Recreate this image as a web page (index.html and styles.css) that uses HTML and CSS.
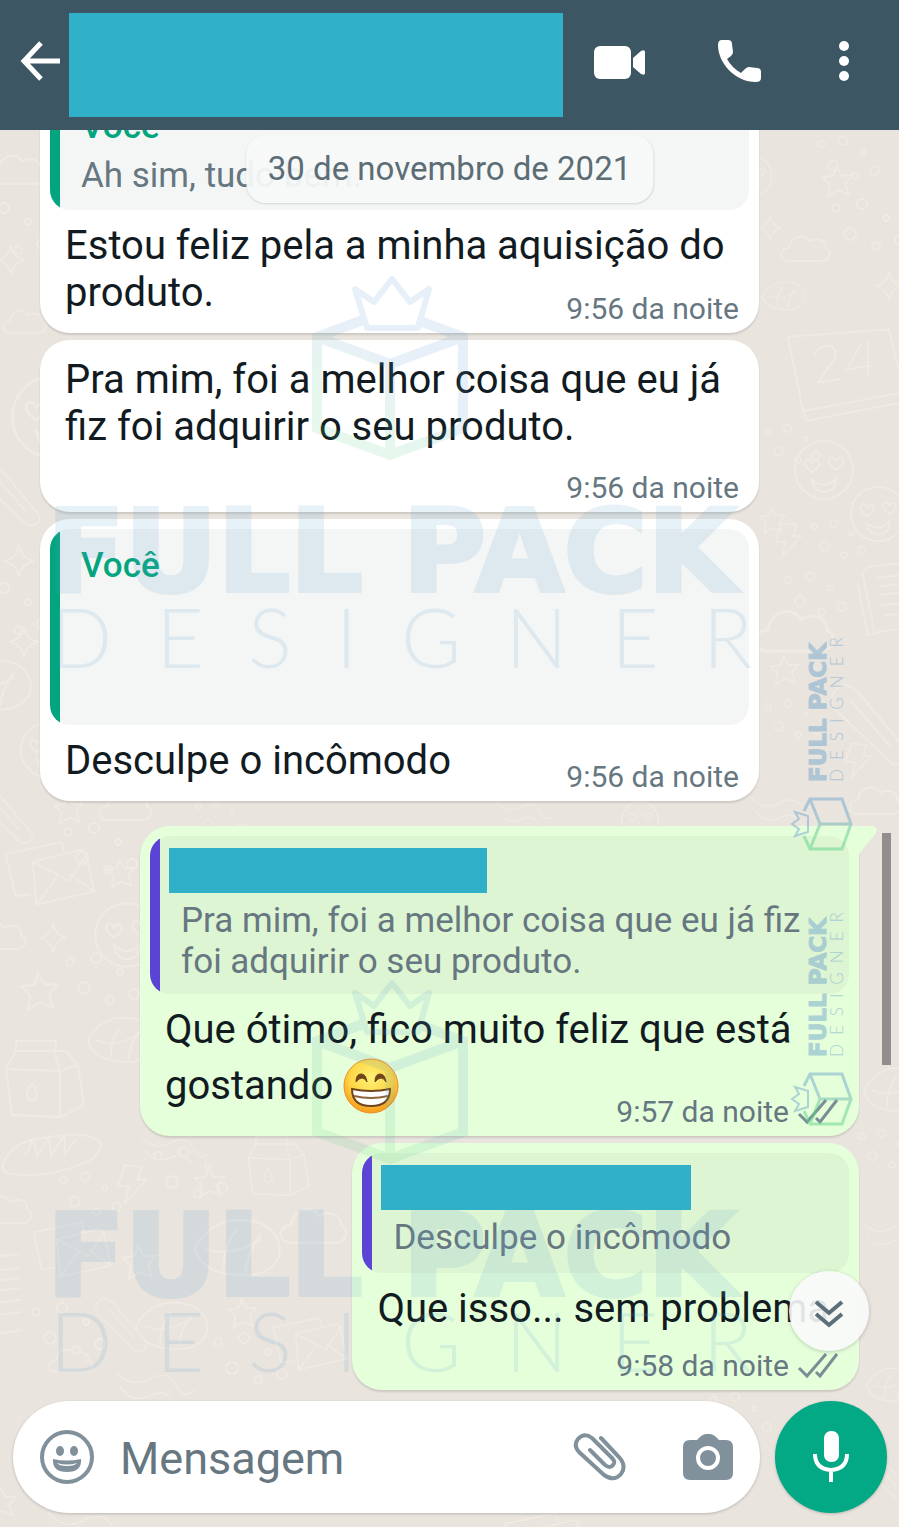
FILE: index.html
```html
<!DOCTYPE html>
<html lang="pt-BR">
<head>
    <meta charset="UTF-8">
    <meta name="viewport" content="width=device-width, initial-scale=1.0">
    <title>Conversa</title>
    <link rel="stylesheet" href="styles.css">
</head>
<body>
    <!-- Shared shapes -->
    <svg class="sprite" width="0" height="0" aria-hidden="true">
        <defs>
            <linearGradient id="cubeFill" gradientUnits="userSpaceOnUse" x1="300" y1="180" x2="370" y2="80">
                <stop offset="0.2" stop-color="#5fd08a"/>
                <stop offset="0.8" stop-color="#649ed2"/>
            </linearGradient>
            <linearGradient id="cubeFillSmall" gradientUnits="userSpaceOnUse" x1="0" y1="0" x2="54" y2="0">
                <stop offset="0.3" stop-color="#5fd28a"/>
                <stop offset="0.7" stop-color="#75a8cf"/>
            </linearGradient>
            <symbol id="double-check" viewBox="0 0 42 28">
                <path d="M2 16l8 8L29 2M19 20l4 4L40 2" fill="none" stroke="currentColor" stroke-width="3"/>
            </symbol>
            <symbol id="star" viewBox="0 0 40 40">
                <path d="M18 4l6 10 12 0-8 9 4 12-12-5-11 7 2-13-8-8 12-2z"/>
            </symbol>
            <symbol id="spark" viewBox="0 0 40 40">
                <path d="M20 3q2 14 16 17-14 3-16 17-2-14-16-17 14-3 16-17z"/>
            </symbol>
            <symbol id="cloud" viewBox="0 0 60 40">
                <path d="M10 34c-9-2-8-14 2-14 1-12 16-17 22-7 8-5 18-1 17 7 8 4 4 14-4 14z"/>
            </symbol>
            <symbol id="bubbles" viewBox="0 0 80 60">
                <circle cx="8" cy="12" r="4"/><circle cx="34" cy="8" r="5"/><circle cx="58" cy="22" r="3"/>
                <circle cx="22" cy="38" r="6"/><circle cx="48" cy="50" r="4"/><circle cx="72" cy="44" r="5"/>
            </symbol>
            <symbol id="mail" viewBox="0 0 100 80">
                <path d="M30 60L14 62 4 18 62 6l3 12M32 26l50-12q5 0 6 5l8 38-60 14zl38 20 20-30M36 71l22-30m12-2l26 18"/>
            </symbol>
            <symbol id="carton" viewBox="0 0 90 90">
                <path d="M14 8h40v10H14zM14 18L4 36l6 46 48 2V38L52 18M58 38l18-6 6 40-24 12M4 36l54 2M52 18l12 0 12 14M30 50q-10 14 0 18 10-4 0-18z"/>
            </symbol>
            <symbol id="shell" viewBox="0 0 110 50">
                <path d="M4 34q10-22 40-24 40-8 56 2 8 8-8 20-40 20-84 14-8-4-4-12zM26 28l8-18 4 18 12-20 2 20 14-22 0 20 12-16"/>
            </symbol>
            <symbol id="bolt" viewBox="0 0 40 50">
                <path d="M10 4l18 2-4 14 10 0-24 26 4-18-12-2z"/>
            </symbol>
            <symbol id="face" viewBox="0 0 64 64">
                <circle cx="32" cy="32" r="29"/>
                <path d="M20 34q-10-7-6-12 4-2 6 3 4-5 7-1 2 5-7 10zM44 32q-10-7-6-12 4-2 6 3 4-5 7-1 2 5-7 10zM20 42q14 10 24-2 0 14-12 14-10 0-12-12z"/>
            </symbol>
            <symbol id="calendar" viewBox="0 0 130 100">
                <path d="M4 10l16 78 106-20M20 88l4 10 104-20M4 10L110 2l12 50M32 30q6-14 18-10 10 10-4 22l-10 16 24-4M82 16L66 44l28-4M88 14l0 36"/>
            </symbol>
            <symbol id="book" viewBox="0 0 70 90">
                <path d="M10 12q4-8 14-8l40-4M10 12l14 70 42-6M4 24l12 60 10 0M26 18l38-4M28 28l36-4M30 38l34-4M32 50l34-4M34 62l32-4"/>
            </symbol>
            <symbol id="leaf" viewBox="0 0 90 60">
                <path d="M4 30q20-34 60-22 20 10 16 30-10 20-40 16-30-2-36-24zM14 30q20 10 50-8M30 50q0-22 12-36M50 52q2-20 14-34"/>
            </symbol>
            <symbol id="tube" viewBox="0 0 90 90">
                <path d="M8 12q10-14 24 0l50 60q0 14-16 12L10 30q-8-10-2-18zM24 20l40 46"/>
            </symbol>
            <symbol id="wave" viewBox="0 0 110 60">
                <path d="M4 10q20 24 46 8 24-10 32 10 12 20 24 6M10 30q14 24 42 10 20-8 30 14"/>
            </symbol>
        </defs>
    </svg>

    <div class="app">
        <svg class="wallpaper" aria-hidden="true">
            <use href="#cloud" x="-14" y="140" width="64" height="58"/>
            <use href="#bubbles" x="-30" y="200" width="80" height="60"/>
            <use href="#spark" x="-6" y="240" width="34" height="40"/>
            <use href="#cloud" x="0" y="300" width="50" height="42"/>
            <use href="#face" x="8" y="372" width="90" height="90"/>
            <use href="#tube" x="-24" y="450" width="70" height="90"/>
            <use href="#spark" x="0" y="536" width="38" height="50"/>
            <use href="#bubbles" x="-30" y="580" width="80" height="60"/>
            <use href="#spark" x="6" y="624" width="36" height="36"/>
            <use href="#leaf" x="-50" y="650" width="90" height="70"/>
            <use href="#face" x="18" y="720" width="60" height="60"/>
            <use href="#tube" x="-26" y="780" width="64" height="70"/>
            <use href="#star" x="52" y="792" width="34" height="34"/>
            <use href="#cloud" x="96" y="786" width="60" height="40"/>
            <use href="#wave" x="470" y="796" width="110" height="34"/>
            <use href="#face" x="620" y="800" width="40" height="40"/>
            <use href="#bubbles" x="180" y="798" width="80" height="40"/>
            <use href="#mail" x="2" y="836" width="96" height="78"/>
            <use href="#star" x="104" y="856" width="34" height="34"/>
            <use href="#bubbles" x="60" y="820" width="80" height="60"/>
            <use href="#face" x="92" y="900" width="70" height="70"/>
            <use href="#cloud" x="-30" y="910" width="60" height="50"/>
            <use href="#spark" x="36" y="918" width="34" height="40"/>
            <use href="#star" x="18" y="964" width="44" height="54"/>
            <use href="#bubbles" x="62" y="950" width="80" height="60"/>
            <use href="#leaf" x="84" y="1010" width="80" height="60"/>
            <use href="#carton" x="2" y="1030" width="90" height="96"/>
            <use href="#shell" x="0" y="1126" width="108" height="54"/>
            <use href="#wave" x="120" y="1130" width="110" height="40"/>
            <use href="#bubbles" x="150" y="1144" width="80" height="60"/>
            <use href="#bolt" x="116" y="1160" width="36" height="48"/>
            <use href="#star" x="192" y="1164" width="36" height="36"/>
            <use href="#carton" x="240" y="1130" width="80" height="70"/>
            <use href="#bubbles" x="50" y="1170" width="80" height="50"/>
            <use href="#cloud" x="-24" y="1184" width="60" height="50"/>
            <use href="#book" x="-44" y="1254" width="70" height="90"/>
            <use href="#mail" x="30" y="1214" width="84" height="74"/>
            <use href="#star" x="120" y="1240" width="40" height="44"/>
            <use href="#leaf" x="190" y="1210" width="100" height="76"/>
            <use href="#cloud" x="276" y="1190" width="76" height="70"/>
            <use href="#tube" x="92" y="1290" width="60" height="70"/>
            <use href="#leaf" x="132" y="1296" width="84" height="60"/>
            <use href="#star" x="226" y="1296" width="34" height="34"/>
            <use href="#mail" x="270" y="1300" width="80" height="90"/>
            <use href="#bubbles" x="210" y="1330" width="80" height="60"/>
            <use href="#bubbles" x="28" y="1300" width="80" height="60"/>
            <use href="#cloud" x="46" y="1340" width="50" height="40"/>
            <use href="#wave" x="100" y="1364" width="110" height="46"/>
            <use href="#star" x="-16" y="1484" width="36" height="36"/>
            <use href="#wave" x="30" y="1504" width="120" height="50"/>
            <use href="#mail" x="500" y="1508" width="90" height="70"/>
            <use href="#face" x="724" y="154" width="56" height="44"/>
            <use href="#star" x="820" y="162" width="36" height="38"/>
            <use href="#bubbles" x="808" y="134" width="80" height="50"/>
            <use href="#cloud" x="778" y="228" width="56" height="40"/>
            <use href="#bubbles" x="828" y="196" width="80" height="60"/>
            <use href="#spark" x="756" y="210" width="28" height="36"/>
            <use href="#leaf" x="760" y="276" width="50" height="40"/>
            <use href="#spark" x="872" y="264" width="34" height="44"/>
            <use href="#tube" x="800" y="290" width="80" height="30"/>
            <use href="#calendar" x="784" y="320" width="124" height="110"/>
            <use href="#face" x="792" y="438" width="64" height="64"/>
            <use href="#bubbles" x="762" y="410" width="60" height="70"/>
            <use href="#face" x="848" y="484" width="60" height="60"/>
            <use href="#star" x="758" y="500" width="30" height="40"/>
            <use href="#bubbles" x="808" y="510" width="60" height="60"/>
            <use href="#bolt" x="770" y="520" width="40" height="40"/>
            <use href="#book" x="854" y="556" width="60" height="90"/>
            <use href="#cloud" x="740" y="600" width="110" height="60"/>
            <use href="#bubbles" x="780" y="570" width="70" height="50"/>
            <use href="#star" x="768" y="650" width="34" height="40"/>
            <use href="#tube" x="826" y="680" width="90" height="90"/>
            <use href="#bubbles" x="762" y="690" width="60" height="60"/>
            <use href="#bolt" x="840" y="740" width="40" height="40"/>
            <use href="#cloud" x="846" y="780" width="60" height="40"/>
            <use href="#wave" x="740" y="790" width="90" height="40"/>
            <use href="#leaf" x="860" y="1060" width="80" height="60"/>
            <use href="#bubbles" x="856" y="1120" width="60" height="60"/>
            <use href="#wave" x="860" y="1190" width="70" height="90"/>
            <use href="#leaf" x="864" y="1350" width="60" height="70"/>
            <use href="#bubbles" x="700" y="1390" width="80" height="50"/>
            <use href="#tube" x="860" y="1440" width="60" height="80"/>
        </svg>

        <header class="chat-header">
            <button type="button" class="icon-btn" aria-label="Voltar">
                <svg width="40" height="40" viewBox="0 0 40 40" fill="none" stroke="#fff" stroke-width="5">
                    <path d="M21 2L4 20l17 18M4 20h36"/>
                </svg>
            </button>
            <div class="contact"></div>
            <div class="header-actions">
                <button type="button" class="icon-btn" aria-label="Chamada de vídeo">
                    <svg width="51" height="44" viewBox="0 0 51 44" fill="#fff">
                        <rect x="0" y="7" width="37" height="33" rx="6"/>
                        <path d="M39 19l8-7q4-2 4 1v21q0 3-4 1l-8-7z"/>
                    </svg>
                </button>
                <button type="button" class="icon-btn" aria-label="Ligar">
                    <svg width="48" height="44" viewBox="0 0 48 44" fill="#fff">
                        <path d="M4 1h6q4 0 4 4l1 8q0 2-2 4l-4 3q5 9 14 14l4-4q2-2 4-2l8 1q4 0 4 4v6q0 4-5 4C17 43 0 24 0 6q0-5 4-5z"/>
                    </svg>
                </button>
                <button type="button" class="icon-btn" aria-label="Mais opções">
                    <svg width="10" height="40" viewBox="0 0 10 40" fill="#fff">
                        <circle cx="5" cy="5" r="5"/><circle cx="5" cy="20" r="5"/><circle cx="5" cy="35" r="5"/>
                    </svg>
                </button>
            </div>
        </header>

        <main class="chat">
            <div class="date-pill">30 de novembro de 2021</div>

            <article class="message received wide">
                <blockquote class="quote quote-me">
                    <strong class="quote-name">Você</strong>
                    <p class="quote-text">Ah sim, tudo bem.</p>
                </blockquote>
                <div class="message-body">
                    <p class="message-text">Estou feliz pela a minha aquisição do produto.</p>
                    <time class="message-time">9:56 da noite</time>
                </div>
            </article>

            <article class="message received wide plain">
                <div class="message-body">
                    <p class="message-text time-below">Pra mim, foi a melhor coisa que eu já fiz foi adquirir o seu produto.</p>
                    <time class="message-time">9:56 da noite</time>
                </div>
            </article>

            <article class="message received wide">
                <blockquote class="quote quote-me quote-tall">
                    <strong class="quote-name">Você</strong>
                </blockquote>
                <div class="message-body">
                    <p class="message-text">Desculpe o incômodo</p>
                    <time class="message-time">9:56 da noite</time>
                </div>
            </article>

            <article class="message sent wide tail">
                <blockquote class="quote quote-them">
                    <div class="hidden-name"></div>
                    <p class="quote-text">Pra mim, foi a melhor coisa que eu já fiz foi adquirir o seu produto.</p>
                </blockquote>
                <div class="message-body">
                    <p class="message-text">Que ótimo, fico muito feliz que está gostando
                        <svg class="emoji" viewBox="0 0 56 56" role="img" aria-label="sorriso">
                            <defs>
                                <radialGradient id="skin" cx="0.5" cy="0.35" r="0.65">
                                    <stop offset="0" stop-color="#fff176"/>
                                    <stop offset="0.6" stop-color="#fdd645"/>
                                    <stop offset="1" stop-color="#f59a1d"/>
                                </radialGradient>
                            </defs>
                            <circle cx="28" cy="28" r="27" fill="url(#skin)" stroke="#ee8f22" stroke-width="1"/>
                            <path d="M13 24q0-8 5-8t6 8q-2-4-5-4t-6 4zM32 24q0-8 5-8t6 8q-2-4-5-4t-6 4z" fill="#70451b" stroke="#70451b" stroke-width="1"/>
                            <path d="M9 31q19 4 38 0 0 17-19 17T9 31z" fill="#fff" stroke="#70451b" stroke-width="2"/>
                            <path d="M11 38q17 4 34 0" fill="none" stroke="#8f6338" stroke-width="2"/>
                        </svg>
                    </p>
                    <div class="message-time">
                        <time>9:57 da noite</time>
                        <svg class="checks" aria-label="Entregue"><use href="#double-check"/></svg>
                    </div>
                </div>
            </article>

            <article class="message sent">
                <blockquote class="quote quote-them">
                    <div class="hidden-name short"></div>
                    <p class="quote-text">Desculpe o incômodo</p>
                </blockquote>
                <div class="message-body">
                    <p class="message-text time-below">Que isso... sem problema</p>
                    <div class="message-time">
                        <time>9:58 da noite</time>
                        <svg class="checks" aria-label="Entregue"><use href="#double-check"/></svg>
                    </div>
                </div>
            </article>

            <div class="scrollbar"></div>
            <button type="button" class="scroll-down" aria-label="Ir para o fim">
                <svg width="32" height="30" viewBox="0 0 32 30" fill="none" stroke="#5d7079" stroke-width="4">
                    <path d="M3 3l13 11L29 3M3 15l13 11 13-11"/>
                </svg>
            </button>
        </main>

        <!-- Studio watermark, two sizes -->
        <div class="watermarks" aria-hidden="true">
            <svg class="mark mark-first" viewBox="0 0 710 400">
                <g fill="none" stroke="url(#cubeFill)" stroke-width="10" stroke-linejoin="miter">
                    <path d="M306 45l-46 17v91l73 27 73-27V62l-46-17M260 62l73 27 73-27M333 89v91"/>
                    <path d="M335 4l18 23 19-13-11 39h-51l-12-39 19 13z" stroke="#649ed2" stroke-width="6" stroke-linejoin="round"/>
                </g>
                <text class="mark-title" x="-10" y="316">FULL PACK</text>
                <text class="mark-subtitle" x="-7" y="393">DESIGNER</text>
            </svg>
            <svg class="mark mark-second" viewBox="0 0 710 400">
                <g fill="none" stroke="url(#cubeFill)" stroke-width="10" stroke-linejoin="miter">
                    <path d="M306 45l-46 17v91l73 27 73-27V62l-46-17M260 62l73 27 73-27M333 89v91"/>
                    <path d="M335 4l18 23 19-13-11 39h-51l-12-39 19 13z" stroke="#649ed2" stroke-width="6" stroke-linejoin="round"/>
                </g>
                <text class="mark-title" x="-10" y="316">FULL PACK</text>
                <text class="mark-subtitle" x="-7" y="393">DESIGNER</text>
            </svg>
            <svg class="side-mark side-mark-first" viewBox="0 0 62 216">
                <g transform="translate(0 215) rotate(-90)">
                    <g fill="none" stroke="url(#cubeFillSmall)" stroke-width="3">
                        <path d="M16 14L3 20v32l25 9 25-9V20l-12-6M3 20l25 10 25-10M28 30v31"/>
                        <path d="M28 2l5 7 7-4-4 13H20L16 5l7 4z" stroke="#75a8cf" stroke-width="2"/>
                    </g>
                    <text class="side-title" x="70" y="36">FULL PACK</text>
                    <text class="side-subtitle" x="70" y="53">DESIGNER</text>
                </g>
            </svg>
            <svg class="side-mark side-mark-second" viewBox="0 0 62 216">
                <g transform="translate(0 215) rotate(-90)">
                    <g fill="none" stroke="url(#cubeFillSmall)" stroke-width="3">
                        <path d="M16 14L3 20v32l25 9 25-9V20l-12-6M3 20l25 10 25-10M28 30v31"/>
                        <path d="M28 2l5 7 7-4-4 13H20L16 5l7 4z" stroke="#75a8cf" stroke-width="2"/>
                    </g>
                    <text class="side-title" x="70" y="36">FULL PACK</text>
                    <text class="side-subtitle" x="70" y="53">DESIGNER</text>
                </g>
            </svg>
        </div>

        <form class="composer">
            <div class="composer-field">
                <button type="button" class="icon-btn" aria-label="Emojis">
                    <svg width="54" height="54" viewBox="0 0 54 54" fill="#80919b">
                        <circle cx="27" cy="27" r="25" fill="none" stroke="#80919b" stroke-width="4"/>
                        <ellipse cx="20" cy="21" rx="4" ry="5"/><ellipse cx="34" cy="21" rx="4" ry="5"/>
                        <path d="M13 29q14 3 28 0 1 13-14 13T13 29z"/>
                        <path d="M17 33q10 3 20 0-2 3-10 3t-10-3z" fill="#fff"/>
                    </svg>
                </button>
                <input type="text" class="composer-input" aria-label="Mensagem" placeholder="Mensagem">
                <button type="button" class="icon-btn" aria-label="Anexar">
                    <svg width="54" height="50" viewBox="0 0 54 50" fill="none" stroke="#80919b" stroke-width="4" stroke-linecap="round">
                        <path d="M28 6l18 19q8 9 2 17-7 8-17 1L6 20Q0 13 5 7q6-7 14-1l20 20q4 4 1 7-3 4-8 0L17 18"/>
                    </svg>
                </button>
                <button type="button" class="icon-btn" aria-label="Câmera">
                    <svg width="50" height="48" viewBox="0 0 50 48">
                        <path d="M14 7l4-4q3-2 5-2h4q2 0 5 2l4 4h7q7 0 7 7v26q0 7-7 7H7q-7 0-7-7V14q0-7 7-7z" fill="#80919b"/>
                        <circle cx="25" cy="25" r="10" fill="#80919b" stroke="#fff" stroke-width="4"/>
                    </svg>
                </button>
            </div>
            <button type="button" class="mic-btn" aria-label="Gravar áudio">
                <svg width="38" height="52" viewBox="0 0 38 52">
                    <rect x="12" y="0" width="15" height="31" rx="7" fill="#fff"/>
                    <path d="M3 23q0 15 16 16 16-1 16-16M19 39v12" fill="none" stroke="#fff" stroke-width="4"/>
                </svg>
            </button>
        </form>
    </div>
</body>
</html>
```
FILE: styles.css
```css
* {
    margin: 0;
    padding: 0;
    box-sizing: border-box;
    font-family: Roboto, "Noto Sans", sans-serif;
}

.sprite {
    position: absolute;
}

.app {
    position: relative;
    display: flex;
    flex-direction: column;
    height: 100vh;
    background: #e9e4dd;
    overflow: hidden;
}

.wallpaper {
    position: absolute;
    inset: 0;
    width: 100%;
    height: 100%;
    fill: none;
    stroke: #efeae3;
    stroke-width: 2;
}

/* Header */
.chat-header {
    position: relative;
    z-index: 3;
    display: flex;
    align-items: flex-start;
    padding: 13px 50px 13px 20px;
    background: #3c5663;
}

.icon-btn {
    display: flex;
    flex: none;
    border: none;
    background: none;
    cursor: pointer;
}

.chat-header > .icon-btn {
    margin-top: 28px;
    margin-right: 9px;
}

.contact {
    flex: 1;
    height: 104px;
    margin-right: 31px;
    background: #2fb0c8;
}

.header-actions {
    display: flex;
    align-items: center;
    gap: 73px;
    padding-top: 26px;
}

/* Messages */
.chat {
    position: relative;
    flex: 1;
    min-height: 0;
    display: flex;
    flex-direction: column;
    justify-content: flex-end;
    gap: 7px;
    padding: 0 40px 11px;
}

.date-pill {
    position: absolute;
    z-index: 2;
    top: 5px;
    left: 50%;
    transform: translateX(-50%);
    padding: 14px 22px;
    border-radius: 20px;
    background: rgba(247, 249, 248, 0.94);
    box-shadow: 0 1px 2px rgba(0, 0, 0, 0.14);
    color: #5c6d76;
    font-size: 33px;
    line-height: 40px;
    white-space: nowrap;
}

.message {
    position: relative;
    flex: none;
    max-width: 719px;
    padding: 10px 10px 6px;
    border-radius: 30px;
    box-shadow: 0 2px 2px rgba(0, 0, 0, 0.12);
}

.wide {
    width: 88%;
}

.received {
    align-self: flex-start;
    background: #fff;
}

.sent {
    align-self: flex-end;
    background: #e5ffda;
}

.tail {
    margin-top: 18px;
    border-top-right-radius: 0;
}

.tail::after {
    content: "";
    position: absolute;
    top: 0;
    left: 100%;
    width: 18px;
    height: 28px;
    background: #e5ffda;
    clip-path: polygon(0 0, 80% 0, 100% 10%, 95% 25%, 0 100%);
}

.quote {
    position: relative;
    min-height: 120px;
    padding: 12px 10px 12px 31px;
    border-radius: 20px;
    background: #f4f6f5;
    overflow: hidden;
}

/* coloured bar on the left edge */
.quote::before {
    content: "";
    position: absolute;
    top: 0;
    bottom: 0;
    left: 0;
    width: 10px;
    background: #03a57f;
}

.quote-me {
    padding-top: 16px;
}

.quote-them {
    background: #ddf5d3;
}

.quote-them::before {
    background: #5b43d6;
}

.quote-tall {
    height: 196px;
}

.quote-name {
    display: block;
    margin-bottom: 7px;
    color: #03a57f;
    font-size: 35px;
    font-weight: 500;
    line-height: 42px;
}

.quote-text {
    color: #667781;
    font-size: 35px;
    line-height: 41px;
}

.hidden-name {
    position: relative;
    z-index: 2;
    width: 318px;
    height: 45px;
    margin: 0 0 7px -12px;
    background: #2fb0c8;
}

.short {
    width: 310px;
}

.message-body {
    display: grid;
    padding: 12px 10px 0 15px;
}

.plain .message-body {
    padding-top: 6px;
}

.message-text,
.message-time {
    grid-area: 1 / 1;
}

.message-text {
    padding: 0 10px 11px 0;
    color: #111b21;
    font-size: 40px;
    line-height: 47px;
}

.time-below {
    padding-bottom: 52px;
}

.plain .time-below {
    padding-bottom: 56px;
}

.message-time {
    display: flex;
    align-items: center;
    align-self: end;
    justify-self: end;
    gap: 8px;
    color: #667781;
    font-size: 30px;
    line-height: 36px;
}

.checks {
    width: 42px;
    height: 28px;
    color: #7b8d94;
}

.emoji {
    width: 56px;
    height: 56px;
    margin-top: 5px;
    vertical-align: -15px;
}

.tail .message-text {
    padding-bottom: 16px;
}

.scrollbar {
    position: absolute;
    right: 8px;
    bottom: 336px;
    width: 9px;
    height: 232px;
    background: #918f8e;
}

.scroll-down {
    position: absolute;
    z-index: 2;
    right: 30px;
    bottom: 50px;
    display: flex;
    align-items: center;
    justify-content: center;
    width: 80px;
    height: 80px;
    padding-top: 6px;
    border: none;
    border-radius: 50%;
    background: rgba(250, 250, 251, 0.9);
    box-shadow: 0 1px 4px rgba(0, 0, 0, 0.2);
    cursor: pointer;
}

/* Watermarks */
.watermarks {
    position: absolute;
    z-index: 1;
    inset: 0;
    pointer-events: none;
}

.mark,
.side-mark {
    position: absolute;
    overflow: visible;
}

.mark {
    left: 57px;
    width: 710px;
    height: 400px;
    opacity: 0.15;
    fill: #64a4d2;
}

.mark-first {
    top: 275px;
}

.mark-second {
    top: 979px;
}

.mark-title {
    font-family: "DejaVu Sans", sans-serif;
    font-size: 114px;
    font-weight: 700;
    stroke: #64a4d2;
    stroke-width: 4px;
}

.mark-subtitle {
    font-family: Lato, sans-serif;
    font-size: 82px;
    font-weight: 300;
    letter-spacing: 44px;
}

.side-mark {
    right: 47px;
    width: 62px;
    height: 216px;
    opacity: 0.5;
    fill: #75a8cf;
}

.side-mark-first {
    top: 637px;
}

.side-mark-second {
    top: 912px;
}

.side-title {
    font-family: "DejaVu Sans", sans-serif;
    font-size: 23px;
    font-weight: 700;
    stroke: #75a8cf;
    stroke-width: 1px;
}

.side-subtitle {
    font-family: Lato, sans-serif;
    font-size: 17px;
    font-weight: 300;
    letter-spacing: 9px;
}

/* Composer */
.composer {
    position: relative;
    z-index: 3;
    display: flex;
    gap: 15px;
    padding: 0 12px 14px 13px;
}

.composer-field {
    flex: 1;
    min-width: 0;
    display: flex;
    align-items: center;
    height: 112px;
    padding: 0 27px;
    border-radius: 56px;
    background: #fff;
    box-shadow: 0 1px 3px rgba(0, 0, 0, 0.2);
}

.composer-field .icon-btn:last-child {
    margin-left: 56px;
}

.composer-input {
    flex: 1;
    min-width: 0;
    height: 80px;
    padding: 2px 20px 0 26px;
    border: none;
    outline: none;
    background: none;
    color: #111b21;
    font-size: 45px;
}

.composer-input::placeholder {
    color: #667781;
    opacity: 1;
}

.mic-btn {
    display: flex;
    align-items: center;
    justify-content: center;
    flex: none;
    width: 112px;
    height: 112px;
    border: none;
    border-radius: 50%;
    background: #03a884;
    box-shadow: 0 1px 3px rgba(0, 0, 0, 0.2);
    cursor: pointer;
}
```
